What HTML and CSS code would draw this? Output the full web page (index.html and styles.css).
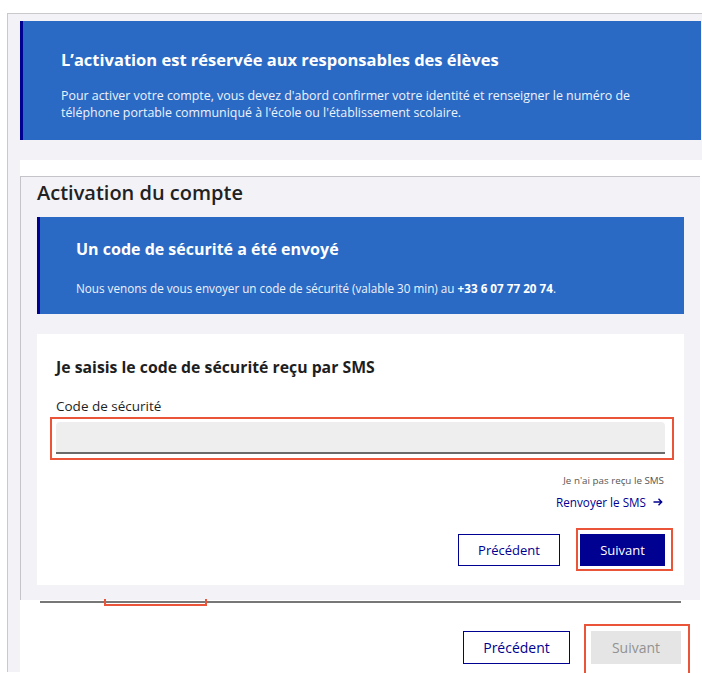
FILE: index.html
```html
<!DOCTYPE html>
<html lang="fr">
<head>
<meta charset="utf-8">
<title>Activation du compte</title>
<link rel="stylesheet" href="styles.css">
</head>
<body>
<div class="frame">
  <section class="notice notice--wide">
    <h2 class="notice__title">L’activation est réservée aux responsables des élèves</h2>
    <p class="notice__text">Pour activer votre compte, vous devez d'abord confirmer votre identité et renseigner le numéro de téléphone portable communiqué à l'école ou l'établissement scolaire.</p>
  </section>

  <div class="sheet">
    <div class="sheet__top"></div>
    <div class="panel">
      <h1 class="panel__title">Activation du compte</h1>

      <section class="notice notice--inner">
        <h2 class="notice__title notice__title--inner">Un code de sécurité a été envoyé</h2>
        <p class="notice__text notice__text--small">Nous venons de vous envoyer un code de sécurité (valable 30 min) au <strong>+33 6 07 77 20 74</strong>.</p>
      </section>

      <form class="card" onsubmit="return false">
        <h3 class="card__title">Je saisis le code de sécurité reçu par SMS</h3>
        <label class="field__label" for="code">Code de sécurité</label>
        <div class="field">
          <input id="code" class="field__input" type="text" autocomplete="one-time-code">
          <span class="mark mark--field"></span>
        </div>
        <div class="resend">
          <span class="resend__hint">Je n'ai pas reçu le SMS</span>
          <a class="resend__link" href="#">Renvoyer le SMS
            <svg class="resend__arrow" width="12" height="12" viewBox="0 0 12 12" aria-hidden="true"><path d="M1.5 6h8M6.5 2.8 9.7 6 6.5 9.2" fill="none" stroke="currentColor" stroke-width="1.4"/></svg>
          </a>
        </div>
        <div class="actions">
          <button class="btn btn--secondary" type="button">Précédent</button>
          <span class="marked">
            <button class="btn btn--primary" type="submit">Suivant</button>
            <span class="mark mark--primary"></span>
          </span>
        </div>
      </form>
    </div>

    <div class="rule"><span class="mark mark--open"></span></div>

    <div class="actions actions--page">
      <button class="btn btn--secondary btn--large" type="button">Précédent</button>
      <span class="marked">
        <button class="btn btn--disabled btn--large" type="button" disabled>Suivant</button>
        <span class="mark mark--disabled"></span>
      </span>
    </div>
  </div>
</div>
</body>
</html>
```

FILE: styles.css
```css
html, body {
  height: 100%;
}

body {
  margin: 0;
  background: #ffffff;
  font-family: "Open Sans", "Noto Sans", sans-serif;
  color: #1e1e1e;
  overflow: hidden;
}

/* outer frame */
.frame {
  margin: 13px 0 0 7px;
  min-height: calc(100% - 14px);
  border-top: 1px solid #c8c8cd;
  border-left: 1px solid #c8c8cd;
  background: #f3f3f7;
  padding: 7px 0 0 12px;
  box-sizing: border-box;
  display: flex;
  flex-direction: column;
}

/* blue notices */
.notice {
  background: #2a6ac5;
  border-left: 3px solid #000091;
  color: #ffffff;
}

.notice--wide {
  margin-right: 1px;
  height: 119px;
  box-sizing: border-box;
  padding: 28px 20px 0 38px;
}

.notice--inner {
  height: 97px;
  box-sizing: border-box;
  padding: 21px 20px 0 36px;
}

.notice__title {
  margin: 0;
  font-size: 16.5px;
  line-height: 22px;
  font-weight: 700;
}

.notice__title--inner {
  font-size: 16px;
}

.notice__text {
  margin: 16px 0 0;
  font-size: 12.4px;
  line-height: 17px;
  color: #eef2fa;
}

.notice__text--small {
  margin-top: 20px;
  font-size: 11.7px;
  line-height: 16px;
}

.notice__text strong {
  color: #ffffff;
}

/* white sheet under the first notice */
.sheet {
  margin-top: 20px;
  flex: 1;
  background: #ffffff;
  display: flex;
  flex-direction: column;
}

.sheet__top {
  height: 16px;
  margin-right: 2px;
}

.panel {
  margin-right: 2px;
  border-top: 1px solid #c4c4c9;
  border-left: 1px solid #c4c4c9;
  background: #f3f3f7;
  padding: 3px 16px 15px 16px;
}

.panel__title {
  margin: 0 0 11px;
  font-size: 20px;
  line-height: 26px;
  font-weight: 600;
  color: #222222;
}

/* form card */
.card {
  margin-top: 20px;
  background: #ffffff;
  padding: 23px 19px 19px;
  display: flex;
  flex-direction: column;
}

.card__title {
  margin: 0;
  font-size: 15.8px;
  line-height: 20px;
  font-weight: 700;
  color: #1e1e1e;
}

.field__label {
  margin-top: 20px;
  font-size: 13.5px;
  line-height: 18px;
  color: #1e1e1e;
}

.field {
  position: relative;
  margin-top: 7px;
}

.field__input {
  display: block;
  width: 100%;
  height: 32px;
  box-sizing: border-box;
  border: 0;
  border-bottom: 2px solid #6a6a6a;
  border-radius: 4px 4px 0 0;
  background: #eeeeee;
  font: inherit;
  padding: 0 12px;
}

.resend {
  margin-top: 20px;
  display: flex;
  flex-direction: column;
  align-items: flex-end;
  padding-right: 1px;
}

.resend__hint {
  font-size: 9.8px;
  line-height: 14px;
  color: #555555;
}

.resend__link {
  margin-top: 6px;
  font-size: 11.7px;
  line-height: 16px;
  color: #000091;
  text-decoration: none;
  display: flex;
  align-items: center;
  gap: 6px;
}

/* buttons */
.actions {
  margin-top: 24px;
  display: flex;
  justify-content: flex-end;
  align-items: center;
  gap: 20px;
}

.actions--page {
  margin-top: 28px;
  padding-right: 21px;
  gap: 21px;
}

.btn {
  height: 32px;
  box-sizing: border-box;
  font-family: inherit;
  font-size: 13px;
  padding: 0;
  border: 1px solid #000091;
  background: #ffffff;
  color: #000091;
  cursor: pointer;
}

.btn--secondary {
  width: 102px;
}

.btn--primary {
  width: 85px;
  background: #000091;
  color: #ffffff;
}

.btn--large {
  height: 33px;
  font-size: 14px;
}

.btn--secondary.btn--large {
  width: 107px;
}

.btn--disabled {
  width: 90px;
  border-color: #e5e5e5;
  background: #e5e5e5;
  color: #929292;
  cursor: default;
}

.marked {
  position: relative;
  display: flex;
}

/* red highlight boxes drawn over controls */
.mark {
  position: absolute;
  border: 2px solid #ea553a;
  pointer-events: none;
}

.mark--field {
  top: -5px;
  right: -9px;
  bottom: -6px;
  left: -6px;
}

.mark--primary {
  top: -6px;
  right: -8px;
  bottom: -5px;
  left: -4px;
}

.mark--disabled {
  top: -7px;
  right: -9px;
  bottom: -12px;
  left: -7px;
}

.mark--open {
  top: -2px;
  left: 64px;
  width: 99px;
  height: 5px;
  border-top: 0;
}

/* divider below the panel */
.rule {
  position: relative;
  margin: 1px 21px 0 20px;
  height: 2px;
  background: #777777;
}
```
